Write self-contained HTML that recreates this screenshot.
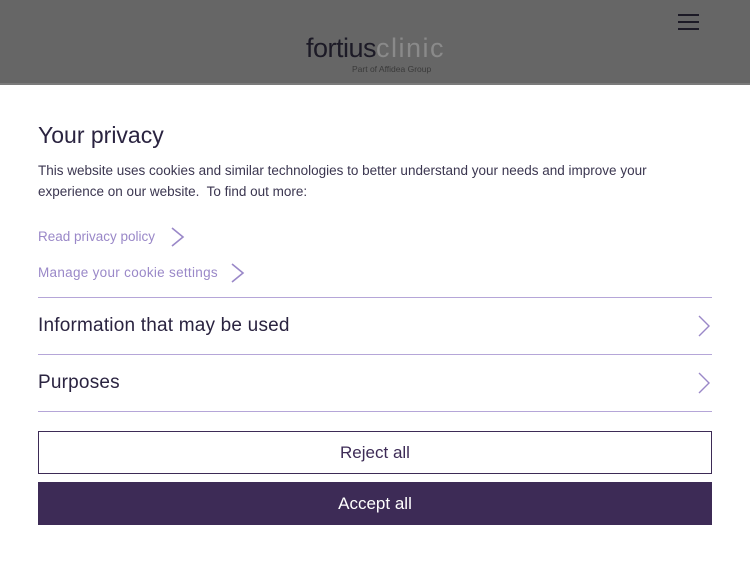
<!DOCTYPE html>
<html><head><style>
body{margin:0;width:750px;height:563px;background:#fff;font-family:"Liberation Sans",sans-serif;position:relative;overflow:hidden}
.hdr{position:absolute;left:0;top:0;width:750px;height:83px;background:#666;border-bottom:2px solid #7a7a7a}
.a{position:absolute}
.link{color:#9a88c8;font-size:13.5px}
.sec{position:absolute;left:38px;font-size:19px;color:#2a2340;letter-spacing:0.2px}
.line{position:absolute;left:38px;width:674px;height:1px;background:#b5a6d8}
</style></head><body>
<div class="hdr">
 <div class="a" style="left:306px;top:33px;font-size:27px;color:#1c1a26;letter-spacing:-0.5px">fortius<span style="color:#8a8a8a;letter-spacing:1.5px">clinic</span></div>
 <div class="a" style="left:352px;top:64px;font-size:8.5px;color:#3a3a3a">Part of Affidea Group</div>
 <div class="a" style="left:678px;top:14px;width:21px;height:2px;background:#1c1a26;box-shadow:0 7px 0 #1c1a26,0 14px 0 #1c1a26"></div>
</div>
<div class="a" style="left:38px;top:122px;font-size:23px;color:#2a2340">Your privacy</div>
<div class="a" style="left:38px;top:160px;width:645px;font-size:13.5px;line-height:21px;color:#3b3650">This website uses cookies and similar technologies to better understand your needs and improve your experience on our website.&nbsp; To find out more:</div>
<div class="a link" style="left:38px;top:229px">Read privacy policy</div>
<svg class="a" style="left:170px;top:226px" width="16" height="22"><path d="M2 2 L13 11 L2 20" fill="none" stroke="#9a88c8" stroke-width="1.6"/></svg>
<div class="a link" style="left:38px;top:265px;letter-spacing:0.3px">Manage your cookie settings</div>
<svg class="a" style="left:230px;top:262px" width="16" height="22"><path d="M2 2 L13 11 L2 20" fill="none" stroke="#9a88c8" stroke-width="1.6"/></svg>
<div class="line" style="top:297px"></div>
<div class="sec" style="top:315px">Information that may be used</div>
<svg class="a" style="left:697px;top:314px" width="16" height="24"><path d="M2 2 L12 12 L2 22" fill="none" stroke="#9a88c8" stroke-width="1.4"/></svg>
<div class="line" style="top:354px"></div>
<div class="sec" style="top:372px">Purposes</div>
<svg class="a" style="left:697px;top:371px" width="16" height="24"><path d="M2 2 L12 12 L2 22" fill="none" stroke="#9a88c8" stroke-width="1.4"/></svg>
<div class="line" style="top:411px"></div>
<div class="a" style="left:38px;top:431px;width:672px;height:41px;border:1px solid #3d2b56;text-align:center;line-height:41px;font-size:17px;color:#3d2b56">Reject all</div>
<div class="a" style="left:38px;top:482px;width:674px;height:43px;background:#3d2b56;text-align:center;line-height:43px;font-size:17px;color:#fff">Accept all</div>
</body></html>
